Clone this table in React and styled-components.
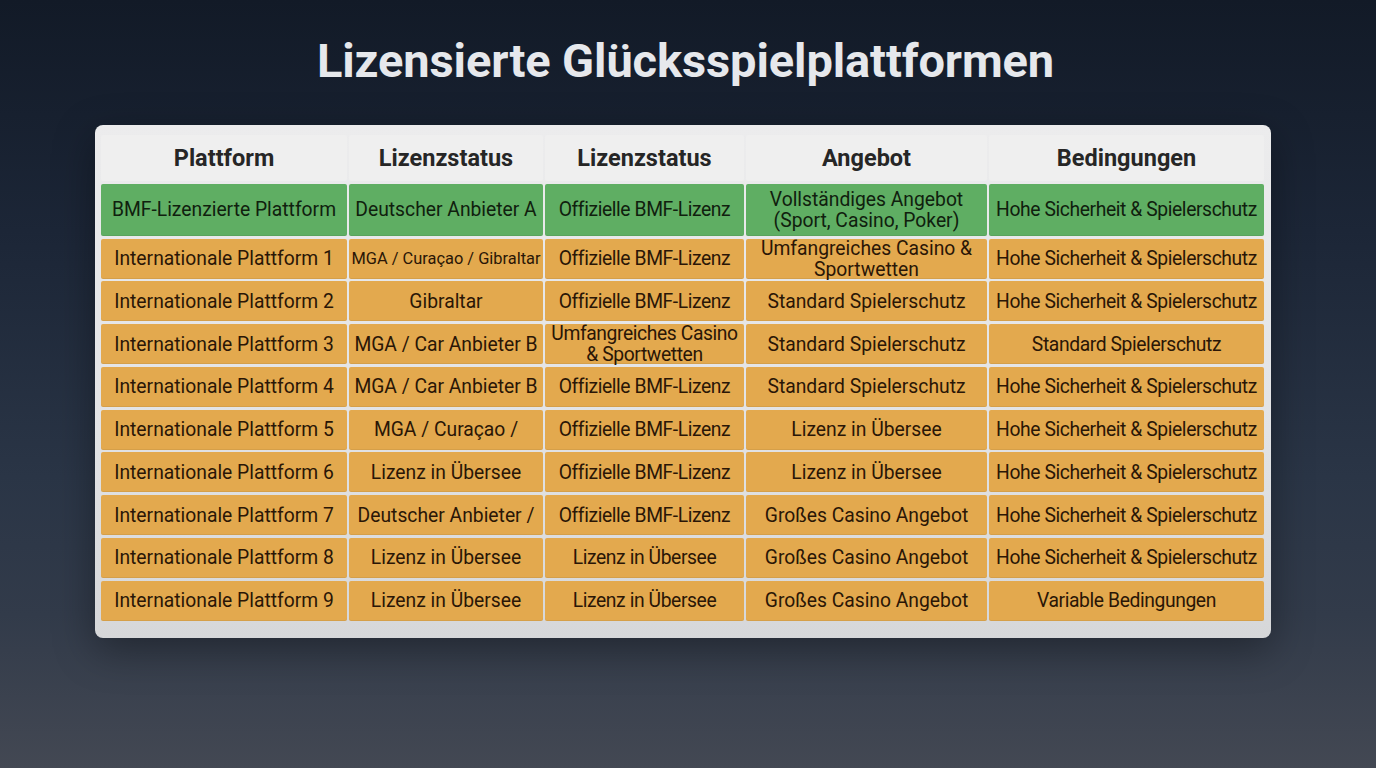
import React from 'react';
import styled, { createGlobalStyle } from 'styled-components';

const GlobalStyle = createGlobalStyle`
  html, body {
    margin: 0;
    padding: 0;
  }
  body {
    font-family: Roboto, "Liberation Sans", sans-serif;
  }
`;

const Page = styled.div`
  width: 1376px;
  height: 768px;
  overflow: hidden;
  box-sizing: border-box;
  display: flex;
  flex-direction: column;
  align-items: center;
  background:
    radial-gradient(ellipse 700px 260px at 50% 40%, rgba(90, 105, 125, 0.22), transparent 70%),
    linear-gradient(180deg, #121a27 0%, #1c2637 30%, #2a3546 62%, #323b4a 80%, #434853 100%);
`;

const Title = styled.h1`
  margin: 33px 0 0 -5px;
  font-family: Roboto, "Liberation Sans", sans-serif;
  font-weight: 700;
  font-size: 47px;
  line-height: 56px;
  color: #e6e8ec;
  letter-spacing: -0.1px;
`;

const Panel = styled.div`
  margin-top: 36px;
  margin-left: -10px;
  width: 1176px;
  box-sizing: border-box;
  padding: 10px 7px 17px 6px;
  background: linear-gradient(180deg, #ececed 0%, #e2e3e5 60%, #d6d7d9 100%);
  border-radius: 8px;
  box-shadow: 0 12px 40px rgba(0, 0, 0, 0.35);
`;

const Table = styled.div`
  display: grid;
  grid-template-columns: 246px 194px 199px 241px 275px;
  grid-template-rows: 46px 52px repeat(9, 40px);
  column-gap: 2px;
  row-gap: 2.75px;
`;

const palette = {
  head: { bg: '#efefef', fg: '#262626' },
  green: { bg: '#5fae63', fg: '#10200e' },
  orange: { bg: '#e3a94e', fg: '#2a1606' },
};

const Cell = styled.div`
  display: flex;
  align-items: center;
  justify-content: center;
  text-align: center;
  border-radius: 2px;
  background: ${p => palette[p.$tone].bg};
  color: ${p => palette[p.$tone].fg};
  font-size: ${p => (p.$head ? '23.5px' : p.$small ? '16.4px' : '19.3px')};
  font-weight: ${p => (p.$head ? 700 : 400)};
  line-height: 21px;
  letter-spacing: ${p => (p.$tight ? '-0.4px' : '0')};
  white-space: pre-line;
  box-shadow: ${p => (p.$head ? 'none' : 'inset 0 -1px 0 rgba(0,0,0,0.06)')};
`;

const headers = ['Plattform', 'Lizenzstatus', 'Lizenzstatus', 'Angebot', 'Bedingungen'];

const rows = [
  ['green', 'BMF-Lizenzierte Plattform', 'Deutscher Anbieter A', 'Offizielle BMF-Lizenz', 'Vollständiges Angebot\n(Sport, Casino, Poker)', 'Hohe Sicherheit & Spielerschutz'],
  ['orange', 'Internationale Plattform 1', 'MGA / Curaçao / Gibraltar', 'Offizielle BMF-Lizenz', 'Umfangreiches Casino &\nSportwetten', 'Hohe Sicherheit & Spielerschutz'],
  ['orange', 'Internationale Plattform 2', 'Gibraltar', 'Offizielle BMF-Lizenz', 'Standard Spielerschutz', 'Hohe Sicherheit & Spielerschutz'],
  ['orange', 'Internationale Plattform 3', 'MGA / Car Anbieter B', 'Umfangreiches Casino\n& Sportwetten', 'Standard Spielerschutz', 'Standard Spielerschutz'],
  ['orange', 'Internationale Plattform 4', 'MGA / Car Anbieter B', 'Offizielle BMF-Lizenz', 'Standard Spielerschutz', 'Hohe Sicherheit & Spielerschutz'],
  ['orange', 'Internationale Plattform 5', 'MGA / Curaçao /', 'Offizielle BMF-Lizenz', 'Lizenz in Übersee', 'Hohe Sicherheit & Spielerschutz'],
  ['orange', 'Internationale Plattform 6', 'Lizenz in Übersee', 'Offizielle BMF-Lizenz', 'Lizenz in Übersee', 'Hohe Sicherheit & Spielerschutz'],
  ['orange', 'Internationale Plattform 7', 'Deutscher Anbieter /', 'Offizielle BMF-Lizenz', 'Großes Casino Angebot', 'Hohe Sicherheit & Spielerschutz'],
  ['orange', 'Internationale Plattform 8', 'Lizenz in Übersee', 'Lizenz in Übersee', 'Großes Casino Angebot', 'Hohe Sicherheit & Spielerschutz'],
  ['orange', 'Internationale Plattform 9', 'Lizenz in Übersee', 'Lizenz in Übersee', 'Großes Casino Angebot', 'Variable Bedingungen'],
];

export default function App() {
  return (
    <>
      <GlobalStyle />
      <Page>
        <Title>Lizensierte Glücksspielplattformen</Title>
        <Panel>
          <Table>
            {headers.map((h, i) => (
              <Cell key={`h${i}`} $tone="head" $head>{h}</Cell>
            ))}
            {rows.map(([tone, ...cells], r) =>
              cells.map((text, c) => (
                <Cell
                  key={`${r}-${c}`}
                  $tone={tone}
                  $small={text === 'MGA / Curaçao / Gibraltar'}
                  $tight={c === 2 || c === 4}
                >
                  {text}
                </Cell>
              ))
            )}
          </Table>
        </Panel>
      </Page>
    </>
  );
}
